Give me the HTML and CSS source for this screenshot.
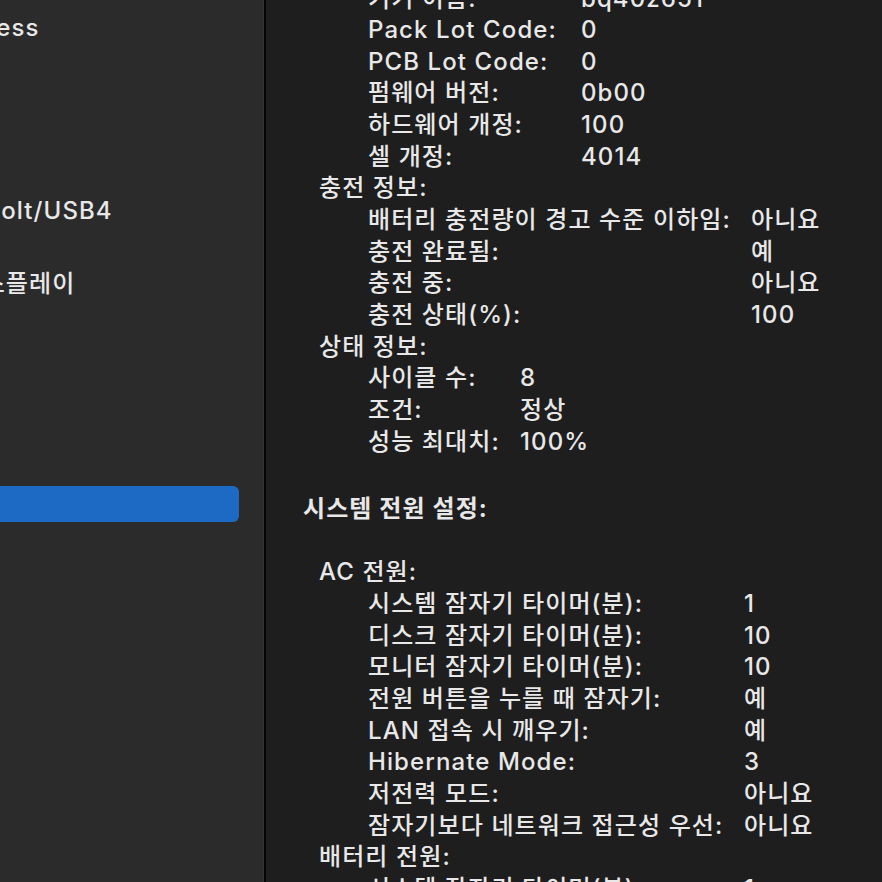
FILE: index.html
```html
<!DOCTYPE html>
<html>
<head>
    <title>시스템 정보 - 전원</title>
    <link rel="stylesheet" href="styles.css">
</head>
<body>
    <div class="window">
        <!-- Source list -->
        <aside class="sidebar">
            <ul class="source-list">
                <li>NVMExpress</li>
                <li>PCI</li>
                <li>SAS</li>
                <li>SATA</li>
                <li>SPI</li>
                <li>Thunderbolt/USB4</li>
                <li>USB</li>
                <li>그래픽/디스플레이</li>
                <li>메모리</li>
                <li>병렬 SCSI</li>
                <li>스토리지</li>
                <li>오디오</li>
                <li>이더넷</li>
                <li class="selected">전원</li>
                <li>진단</li>
                <li>카메라</li>
                <li>카드 리더</li>
                <li>컨트롤러</li>
                <li>프린터</li>
            </ul>
        </aside>

        <!-- Report -->
        <main class="report">
            <div class="report-body">
                <dl class="fields fields-model">
                    <dt>기기 이름:</dt><dd>bq40z651</dd>
                    <dt>Pack Lot Code:</dt><dd>0</dd>
                    <dt>PCB Lot Code:</dt><dd>0</dd>
                    <dt>펌웨어 버전:</dt><dd>0b00</dd>
                    <dt>하드웨어 개정:</dt><dd>100</dd>
                    <dt>셀 개정:</dt><dd>4014</dd>
                </dl>

                <div class="group-title">충전 정보:</div>
                <dl class="fields fields-charge">
                    <dt>배터리 충전량이 경고 수준 이하임:</dt><dd>아니요</dd>
                    <dt>충전 완료됨:</dt><dd>예</dd>
                    <dt>충전 중:</dt><dd>아니요</dd>
                    <dt>충전 상태(%):</dt><dd>100</dd>
                </dl>

                <div class="group-title">상태 정보:</div>
                <dl class="fields fields-health">
                    <dt>사이클 수:</dt><dd>8</dd>
                    <dt>조건:</dt><dd>정상</dd>
                    <dt>성능 최대치:</dt><dd>100%</dd>
                </dl>

                <h2 class="report-heading">시스템 전원 설정:</h2>

                <div class="group-title">AC 전원:</div>
                <dl class="fields fields-power">
                    <dt>시스템 잠자기 타이머(분):</dt><dd>1</dd>
                    <dt>디스크 잠자기 타이머(분):</dt><dd>10</dd>
                    <dt>모니터 잠자기 타이머(분):</dt><dd>10</dd>
                    <dt>전원 버튼을 누를 때 잠자기:</dt><dd>예</dd>
                    <dt>LAN 접속 시 깨우기:</dt><dd>예</dd>
                    <dt>Hibernate Mode:</dt><dd>3</dd>
                    <dt>저전력 모드:</dt><dd>아니요</dd>
                    <dt>잠자기보다 네트워크 접근성 우선:</dt><dd>아니요</dd>
                </dl>

                <div class="group-title">배터리 전원:</div>
                <dl class="fields fields-power">
                    <dt>시스템 잠자기 타이머(분):</dt><dd>1</dd>
                    <dt>디스크 잠자기 타이머(분):</dt><dd>10</dd>
                </dl>
            </div>
        </main>
    </div>
</body>
</html>
```
FILE: styles.css
```css
html, body {
    margin: 0;
    height: 100%;
}

body {
    background-color: #1e1e1e;
    color: #e8e8e8;
    font-family: Inter, "Noto Sans CJK KR", sans-serif;
    font-size: 24px;
    font-weight: 500;
    letter-spacing: 1.1px;
    overflow: hidden;
}

.window {
    display: flex;
    height: 882px;
}

/* Sidebar */
.sidebar {
    width: 263px;
    flex-shrink: 0;
    background-color: #2b2b2c;
    border-right: 1px solid #353536;
    overflow: hidden;
}

.source-list {
    list-style: none;
    margin: 0 0 0 -132px;
    padding: 10px 0 0 0;
}

.source-list li {
    height: 36.6px;
    line-height: 36.6px;
    padding-left: 12px;
    margin-right: 24px;
    white-space: nowrap;
    border-radius: 6px;
}

.source-list li.selected {
    background-color: #1d6ac5;
    color: #fff;
}

/* Report panel */
.report {
    flex: 1;
    border-left: 2px solid #050505;
    overflow: hidden;
}

.report-body {
    margin-top: -17.5px;
    padding-left: 37px;
}

.fields {
    display: grid;
    margin: 0 0 0 65px;
    line-height: 31.65px;
}

.fields dt,
.fields dd {
    margin: 0;
    white-space: nowrap;
}

.fields-model {
    grid-template-columns: 213px 1fr;
}

.fields-charge {
    grid-template-columns: 383px 1fr;
}

.fields-health {
    grid-template-columns: 152px 1fr;
}

.fields-power {
    grid-template-columns: 376px 1fr;
}

.group-title {
    margin-left: 16px;
    line-height: 31.65px;
}

.report-heading {
    font-size: 24px;
    font-weight: 700;
    margin: 35.65px 0 31.65px 0;
    line-height: 31.65px;
}
```
